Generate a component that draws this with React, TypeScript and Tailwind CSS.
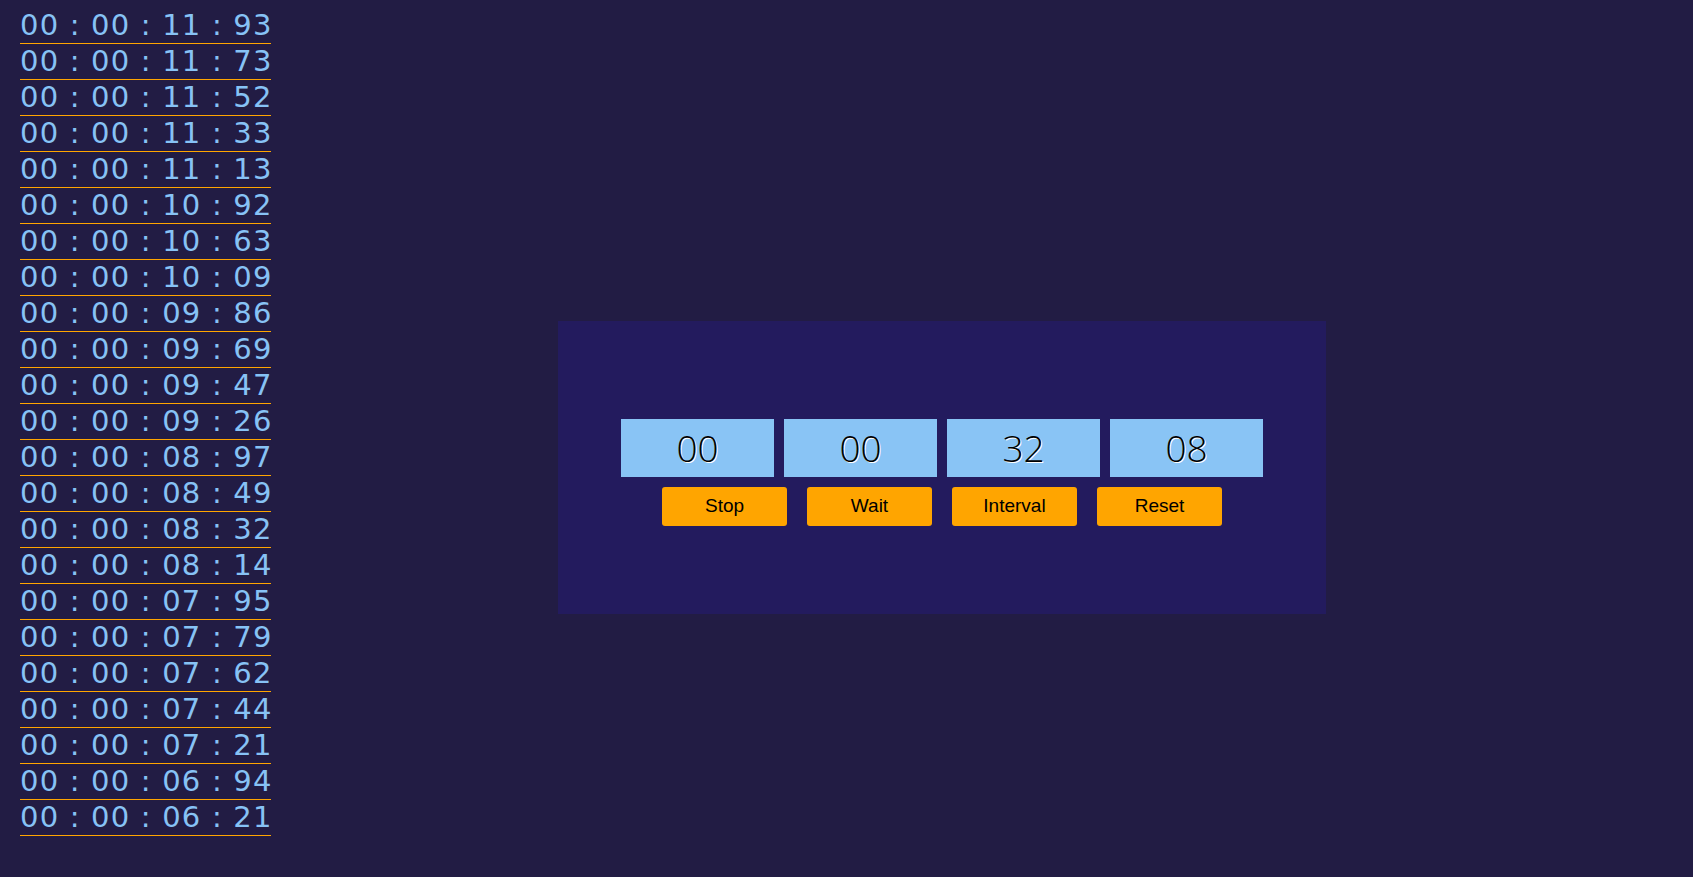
import React from 'react';

const laps = [
  '00 : 00 : 11 : 93',
  '00 : 00 : 11 : 73',
  '00 : 00 : 11 : 52',
  '00 : 00 : 11 : 33',
  '00 : 00 : 11 : 13',
  '00 : 00 : 10 : 92',
  '00 : 00 : 10 : 63',
  '00 : 00 : 10 : 09',
  '00 : 00 : 09 : 86',
  '00 : 00 : 09 : 69',
  '00 : 00 : 09 : 47',
  '00 : 00 : 09 : 26',
  '00 : 00 : 08 : 97',
  '00 : 00 : 08 : 49',
  '00 : 00 : 08 : 32',
  '00 : 00 : 08 : 14',
  '00 : 00 : 07 : 95',
  '00 : 00 : 07 : 79',
  '00 : 00 : 07 : 62',
  '00 : 00 : 07 : 44',
  '00 : 00 : 07 : 21',
  '00 : 00 : 06 : 94',
  '00 : 00 : 06 : 21',
];

const digits = ['00', '00', '32', '08'];
const buttons = ['Stop', 'Wait', 'Interval', 'Reset'];

export default function App() {
  return (
    <div className="min-h-screen w-full bg-[#221c44] flex items-start">
      {/* Lap list */}
      <ul className="ml-[20px] mt-[8px] w-[251px] shrink-0 font-['DejaVu_Sans',sans-serif] text-[29px] leading-[35px] tracking-[1.2px] text-[#87c2f5]">
        {laps.map((lap, i) => (
          <li key={i} className="h-[36px] border-b border-[#ffa500] whitespace-nowrap">
            {lap}
          </li>
        ))}
      </ul>

      {/* Stopwatch panel */}
      <div className="ml-[287px] mt-[321px] w-[768px] h-[293px] bg-[#231b5e] flex flex-col items-center pt-[98px]">
        <div className="flex gap-[10px]">
          {digits.map((d, i) => (
            <div
              key={i}
              className="w-[153px] h-[58px] bg-[#89c4f5] flex items-center justify-center font-['Open_Sans',sans-serif] font-light text-[37px] text-black [text-shadow:1px_1px_0_#ffffff]"
            >
              {d}
            </div>
          ))}
        </div>
        <div className="flex gap-[20px] mt-[10px]">
          {buttons.map((b) => (
            <button
              key={b}
              className="w-[125px] h-[39px] rounded-[3px] bg-[#ffa500] text-black font-['Liberation_Sans',Arial,sans-serif] text-[19px] flex items-center justify-center"
            >
              {b}
            </button>
          ))}
        </div>
      </div>
    </div>
  );
}
